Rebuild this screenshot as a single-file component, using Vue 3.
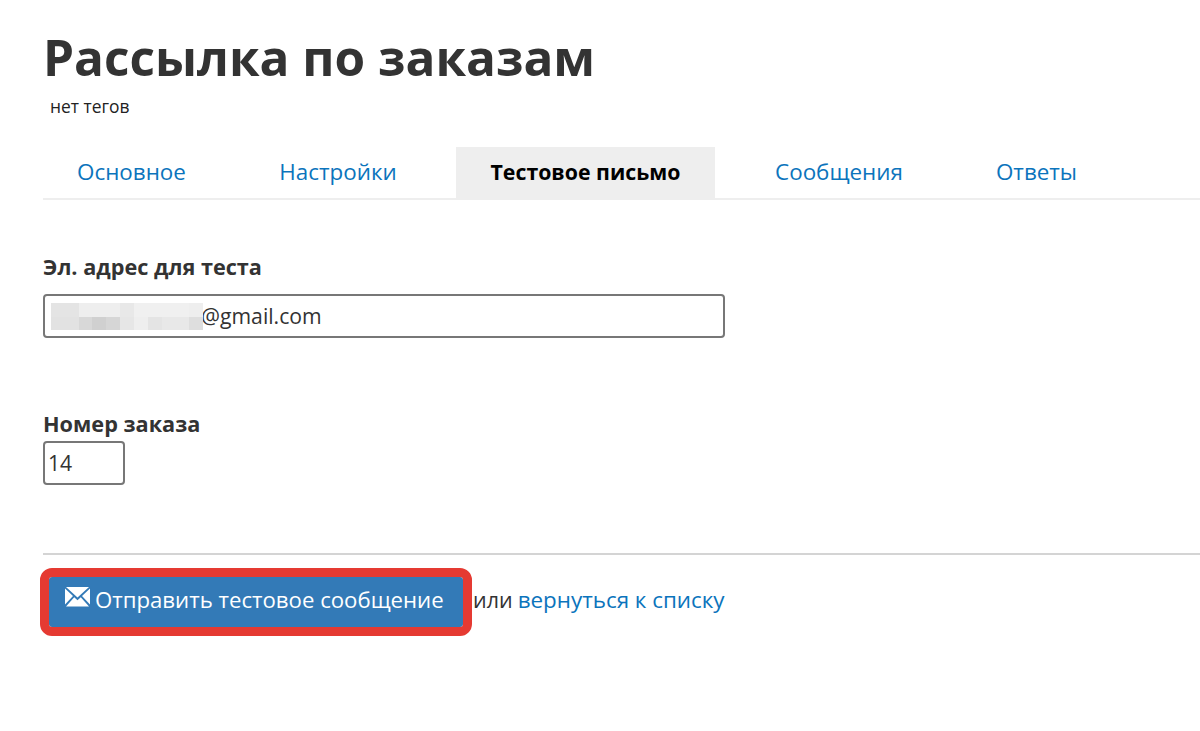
<script setup>
const tabs = [
  { label: 'Основное', width: 177 },
  { label: 'Настройки', width: 184 },
  { label: 'Тестовое письмо', width: 259, active: true },
  { label: 'Сообщения', width: 196 },
  { label: 'Ответы', width: 147 },
]
const blur = [
  '#e4e4e4','#e4e4e4','#eeeeee','#eeeeee','#eeeeee','#e8e8e8','#f0f0f0','#f0f0f0','#f0f0f0','#f0f0f0','#eeeeee',
  '#e2e2e2','#e2e2e2','#d8d8d8','#d0d0d0','#d6d6d6','#e6e6e6','#eeeeee','#e4e4e4','#e8e8e8','#e8e8e8','#dedede',
]
</script>

<template>
  <div class="page">
    <h1 class="title">Рассылка по заказам</h1>
    <div class="tags">нет тегов</div>
    <nav class="tabs">
      <a
        v-for="t in tabs"
        :key="t.label"
        class="tab"
        :class="{ active: t.active }"
        :style="{ width: t.width + 'px' }"
      >{{ t.label }}</a>
    </nav>
    <div class="field first">
      <label class="label">Эл. адрес для теста</label>
      <div class="email-wrap">
        <input class="input email" value="@gmail.com" />
        <div class="blur">
          <i v-for="(c, i) in blur" :key="i" :style="{ background: c }"></i>
        </div>
      </div>
    </div>
    <div class="field second">
      <label class="label">Номер заказа</label>
      <input class="input order" value="14" />
    </div>
    <hr class="rule" />
    <div class="actions">
      <button class="send">
        <svg class="mail" width="25" height="21" viewBox="0 0 25 21">
          <path fill="#fff" d="M1 0h23L12.5 10.5zM0 1.5 8 9 0 17.5zM25 1.5 17 9l8 8.5zM9.2 10.2l3.3 3 3.3-3L24 19.5H1z" />
        </svg>
        <span>Отправить тестовое сообщение</span>
      </button>
      <span class="or">или</span>
      <a class="back">вернуться к списку</a>
    </div>
  </div>
</template>

<style scoped>
.page {
  box-sizing: border-box;
  height: 731px;
  padding: 25px 0 0 43px;
  overflow: hidden;
  font-family: "Open Sans", "Noto Sans", sans-serif;
  color: #333;
}
.title {
  margin: 0;
  font-size: 49.5px;
  line-height: 64px;
  font-weight: 700;
  color: #333;
}
.tags {
  margin: 7px 0 0 7px;
  font-size: 17.4px;
  line-height: 20px;
  color: #222;
}
.tabs {
  display: flex;
  gap: 26px;
  margin-top: 31px;
  height: 53px;
  box-sizing: border-box;
  border-bottom: 2px solid #eee;
}
.tab {
  box-sizing: border-box;
  height: 51px;
  line-height: 49px;
  text-align: center;
  font-size: 22.4px;
  color: #0b74bc;
  white-space: nowrap;
}
.tab.active {
  background: #eee;
  color: #000;
  font-weight: 700;
  font-size: 21.3px;
}
.field { display: flex; flex-direction: column; }
.first { margin-top: 52px; }
.second { margin-top: 71px; }
.label {
  font-size: 21.7px;
  line-height: 30px;
  font-weight: 700;
  color: #333;
}
.first .label { margin-bottom: 12px; }
.second .label { margin-bottom: 2px; }
.email-wrap { position: relative; width: 682px; }
.input {
  box-sizing: border-box;
  height: 44px;
  border: 2px solid #777;
  border-radius: 4px;
  background: #fff;
  outline: none;
  font-family: inherit;
  font-size: 21.2px;
  padding-bottom: 2px;
  color: #333;
}
.email { width: 682px; padding-left: 156px; }
.order { width: 82px; padding-left: 3px; }
.blur {
  position: absolute;
  left: 8px;
  top: 9px;
  width: 152px;
  height: 27px;
  display: grid;
  grid-template-columns: repeat(11, 1fr);
  grid-template-rows: repeat(2, 1fr);
}
.rule {
  margin: 68px 0 0;
  border: 0;
  border-top: 2px solid #d4d4d4;
}
.actions {
  display: flex;
  align-items: center;
  margin: 13px 0 0 -3px;
}
.send {
  box-sizing: border-box;
  width: 432px;
  height: 68px;
  display: flex;
  align-items: center;
  padding: 0 0 5px 16px;
  background: #337ab7;
  border: 9px solid #e53a32;
  border-radius: 12px;
  background-clip: padding-box;
  color: #fff;
  font-family: inherit;
  font-size: 22.2px;
  white-space: nowrap;
}
.mail { margin: -5px 5px 0 0; flex: none; }
.or {
  margin: 0 0 6px 1px;
  font-size: 21.5px;
  color: #333;
}
.back {
  margin: 0 0 6px 5px;
  font-size: 22.4px;
  color: #0b74bc;
}
</style>
